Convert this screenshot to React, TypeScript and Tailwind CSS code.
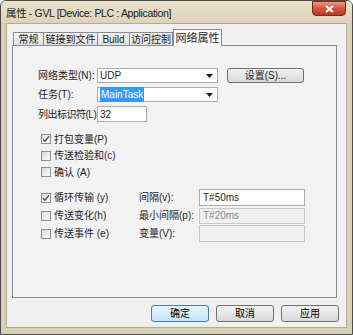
import React from 'react';

const Check = ({ on = false }: { on?: boolean }) => (
  <span className="w-[10px] h-[10px] border border-[#8e8f8f] bg-gradient-to-br from-[#dcdcdc] to-[#fbfbfb] flex items-center justify-center shrink-0">
    {on && (
      <svg width="8" height="8" viewBox="0 0 8 8">
        <path d="M1 4.2 L3 6.3 L7 1.2" fill="none" stroke="#3c5a8a" strokeWidth="1.4" />
      </svg>
    )}
  </span>
);

const Combo = ({ children }: { children: React.ReactNode }) => (
  <div className="w-[121px] h-[15px] bg-white border border-[#abadb3] flex items-center pl-[2px] pr-[4px]">
    <div className="flex-1 flex items-center">{children}</div>
    <svg width="7" height="4" viewBox="0 0 7 4">
      <path d="M0 0 H7 L3.5 4 Z" fill="#1a1a1a" />
    </svg>
  </div>
);

const Btn = ({ label, def = false }: { label: string; def?: boolean }) => (
  <div
    className={
      'w-[58px] h-[17px] rounded-[3px] border flex items-center justify-center text-[10px] text-black ' +
      (def
        ? 'border-[#3c7fb1] bg-gradient-to-b from-[#eaf6fd] to-[#bee6fd]'
        : 'border-[#707070] bg-gradient-to-b from-[#f2f2f2] to-[#d9d9d9]')
    }
  >
    {label}
  </div>
);

const CheckRow = ({ on, label, h }: { on?: boolean; label: string; h: string }) => (
  <div className={'flex items-center gap-[3px] pl-[3px] ' + h}>
    <Check on={on} />
    <span>{label}</span>
  </div>
);

export default function App() {
  return (
    <div className="w-[353px] h-[335px] bg-[#d9d0b8] border border-[#4b4b4b] rounded-t-[6px] flex flex-col font-['Liberation_Sans','Noto_Sans_CJK_SC',sans-serif] text-[10px] text-[#1e1e1e] overflow-hidden">
      {/* title bar */}
      <div className="h-[22px] flex items-start bg-gradient-to-b from-[#e9e1cc] to-[#ddd3ba]">
        <span className="pl-[5px] pt-[5px] text-[10.5px] tracking-[-0.35px] text-[#1a1a1a] flex-1">
          属性 - GVL [Device: PLC : Application]
        </span>
        <div className="w-[34px] h-[15px] mr-[6px] rounded-b-[4px] border border-[#7a2a1c] bg-gradient-to-b from-[#e79a87] via-[#d0553f] to-[#c1361d] flex items-center justify-center">
          <svg width="9" height="8" viewBox="0 0 9 8">
            <path d="M1 1 L8 7 M8 1 L1 7" stroke="#fff" strokeWidth="2" />
          </svg>
        </div>
      </div>

      <div className="flex-1 px-[5px] pb-[6px]">
        <div className="h-full border border-[#b4ab93] bg-[#f0f0f0] pl-[5px] pr-[8px] pt-[5px] flex flex-col">
          {/* tabs */}
          <div className="h-[16px] flex items-end ml-[1px] relative z-10">
            <div className="w-[31px] h-[13px] border border-b-0 border-[#898c95] bg-gradient-to-b from-[#f4f4f4] to-[#e1e1e1] flex items-center justify-center">常规</div>
            <div className="w-[54px] h-[13px] border border-b-0 border-l-0 border-[#898c95] bg-gradient-to-b from-[#f4f4f4] to-[#e1e1e1] flex items-center justify-center">链接到文件</div>
            <div className="w-[32px] h-[13px] border border-b-0 border-l-0 border-[#898c95] bg-gradient-to-b from-[#f4f4f4] to-[#e1e1e1] flex items-center justify-center">Build</div>
            <div className="w-[43px] h-[13px] border border-b-0 border-l-0 border-[#898c95] bg-gradient-to-b from-[#f4f4f4] to-[#e1e1e1] flex items-center justify-center">访问控制</div>
            <div className="w-[49px] h-[17px] -mb-px border border-b-0 border-[#898c95] bg-[#fbfbfb] flex items-center justify-center text-[11px]">网络属性</div>
          </div>

          {/* panel */}
          <div className="w-[325px] h-[253px] border border-[#898c95] bg-[#f2f2f2] pl-[25px] pt-[22px]">
            <div className="flex flex-col gap-[4px]">
              <div className="flex items-center h-[15px]">
                <span className="w-[59px]">网络类型(N):</span>
                <Combo>UDP</Combo>
                <div className="ml-[9px] w-[77px] h-[15px] rounded-[3px] border border-[#707070] bg-gradient-to-b from-[#f2f2f2] to-[#d9d9d9] flex items-center justify-center">
                  设置(S)...
                </div>
              </div>
              <div className="flex items-center h-[15px]">
                <span className="w-[59px]">任务(T):</span>
                <Combo>
                  <span className="bg-[#3399ff] text-white px-[1px]">MainTask</span>
                </Combo>
              </div>
              <div className="flex items-center h-[16px]">
                <span className="w-[59px] whitespace-nowrap tracking-[-0.5px]">列出标识符(L)</span>
                <div className="w-[50px] h-[16px] bg-white border border-[#abadb3] flex items-center pl-[2px]">32</div>
              </div>
            </div>

            <div className="mt-[9px]">
              <CheckRow on label="打包变量(P)" h="h-[16px]" />
              <CheckRow label="传送检验和(c)" h="h-[17px]" />
              <CheckRow label="确认 (A)" h="h-[16px]" />
            </div>

            <div className="mt-[9px] grid grid-cols-[101px_60px_106px] auto-rows-[17px] gap-y-[1px] items-center">
              <CheckRow on label="循环传输 (y)" h="h-[17px]" />
              <span>间隔(v):</span>
              <div className="h-[17px] bg-white border border-[#abadb3] flex items-center pl-[3px]">T#50ms</div>

              <CheckRow label="传送变化(h)" h="h-[17px]" />
              <span>最小间隔(p):</span>
              <div className="h-[16px] bg-[#f0f0f0] border border-[#c8c8c8] flex items-center pl-[3px] text-[#8a8a8a]">T#20ms</div>

              <CheckRow label="传送事件 (e)" h="h-[17px]" />
              <span>变量(V):</span>
              <div className="h-[17px] bg-[#f0f0f0] border border-[#c8c8c8]" />
            </div>
          </div>

          {/* buttons */}
          <div className="mt-[7px] flex justify-end gap-[7px] -mr-[1px]">
            <Btn label="确定" def />
            <Btn label="取消" />
            <Btn label="应用" />
          </div>
        </div>
      </div>
    </div>
  );
}
